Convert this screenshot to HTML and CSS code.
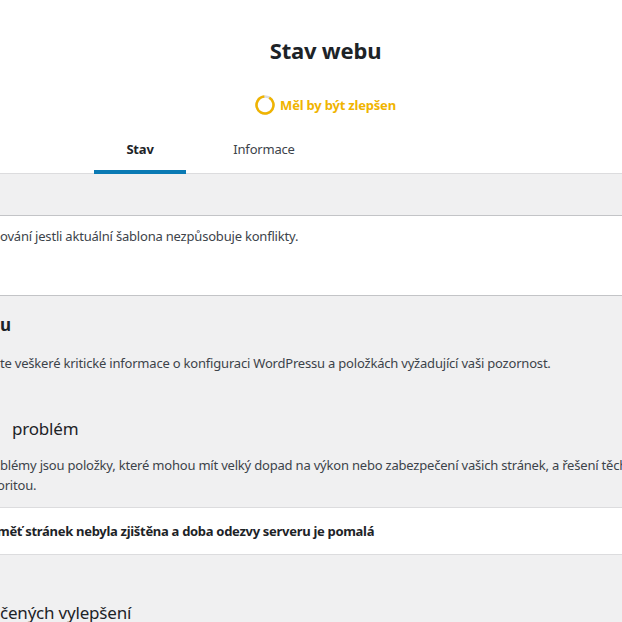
FILE: index.html
```html
<!DOCTYPE html>
<html lang="cs">
<head>
  <meta charset="UTF-8">
  <meta name="viewport" content="width=device-width, initial-scale=1.0">
  <title>Stav webu</title>
  <link rel="stylesheet" href="styles.css">
</head>
<body>

  <!-- Hlavička se skóre a záložkami -->
  <div class="health-header">
    <div class="title-section">
      <h1>Stav webu</h1>
      <div class="score">
        <svg class="ring" width="20" height="20" viewBox="0 0 20 20">
          <circle cx="10" cy="10" r="8.5" fill="none" stroke="#dcdcde" stroke-width="2.5"/>
          <circle cx="10" cy="10" r="8.5" fill="none" stroke="#f0b400" stroke-width="2.5"
                  stroke-dasharray="48 53.4" transform="rotate(-60 10 10)"/>
        </svg>
        <span class="score-label">Měl by být zlepšen</span>
      </div>
    </div>
    <nav class="tabs">
      <a href="#" class="tab active">Stav</a>
      <a href="#" class="tab">Informace</a>
    </nav>
  </div>

  <div class="health-body">
    <div class="notice">
      <p>ování jestli aktuální šablona nezpůsobuje konflikty.</p>
    </div>

    <h2 class="section-title">u</h2>
    <p class="desc">te veškeré kritické informace o konfiguraci WordPressu a položkách vyžadující vaši pozornost.</p>

    <h3 class="issues-title">problém</h3>
    <p class="desc wide">blémy jsou položky, které mohou mít velký dopad na výkon nebo zabezpečení vašich stránek, a řešení těchto<br><span class="cut">oritou.</span></p>

    <div class="issue">
      <span class="issue-name">měť stránek nebyla zjištěna a doba odezvy serveru je pomalá</span>
    </div>

    <h3 class="issues-title last">čených vylepšení</h3>
  </div>

</body>
</html>
```

FILE: styles.css
```css
html, body {
  margin: 0;
  padding: 0;
  overflow: hidden;
}
body {
  font-family: "Noto Sans", "Open Sans", sans-serif;
  font-size: 13px;
  letter-spacing: -0.2px;
  color: #1d2327;
  background: #f0f0f1;
  width: 622px;
  height: 622px;
}
.health-header {
  background: #fff;
  border-bottom: 1px solid #dcdcde;
}
.title-section {
  padding: 34px 0 0 29px;
  text-align: center;
}
h1 {
  margin: 0;
  font-size: 22px;
  font-weight: 700;
  line-height: 32px;
  color: #1d2327;
}
.score {
  display: flex;
  justify-content: center;
  align-items: center;
  gap: 5px;
  margin-top: 29px;
}
.ring {
  display: block;
}
.score-label {
  font-weight: 700;
  color: #f0b400;
  font-size: 13px;
}
.tabs {
  display: flex;
  gap: 32px;
  margin: 15px 0 0 94px;
}
.tab {
  width: 92px;
  text-align: center;
  padding: 10px 0 12px;
  color: #3c434a;
  text-decoration: none;
  border-bottom: 4px solid transparent;
  margin-bottom: -1px;
}
.tab.active {
  font-weight: 700;
  color: #1d2327;
  border-bottom-color: #0a7ab4;
}
.health-body {
  padding-top: 41px;
}
.notice {
  background: #fff;
  border-top: 1px solid #c3c4c7;
  border-bottom: 1px solid #c3c4c7;
  height: 79px;
}
.notice p {
  margin: 0;
  padding-top: 10px;
  color: #3c434a;
  line-height: 20px;
}
.section-title {
  margin: 17px 0 0;
  font-size: 17px;
  font-weight: 700;
  line-height: 24px;
  color: #1d2327;
}
.desc {
  margin: 16px 0 0;
  line-height: 20px;
  color: #3c434a;
  white-space: nowrap;
}
.desc.wide {
  margin-top: 14px;
}
.cut {
  display: inline-block;
  margin-left: -3px;
}
.issues-title {
  margin: 44px 0 0 12px;
  font-size: 17px;
  font-weight: 400;
  line-height: 24px;
  color: #1d2327;
}
.issue {
  margin-top: 12px;
  background: #fff;
  border-top: 1px solid #dcdcde;
  border-bottom: 1px solid #dcdcde;
  height: 46px;
  display: flex;
  align-items: center;
  text-indent: -3px;
}
.issue-name {
  font-weight: 700;
  letter-spacing: -0.3px;
  color: #1d2327;
}
.issues-title.last {
  margin: 46px 0 0;
}
```
